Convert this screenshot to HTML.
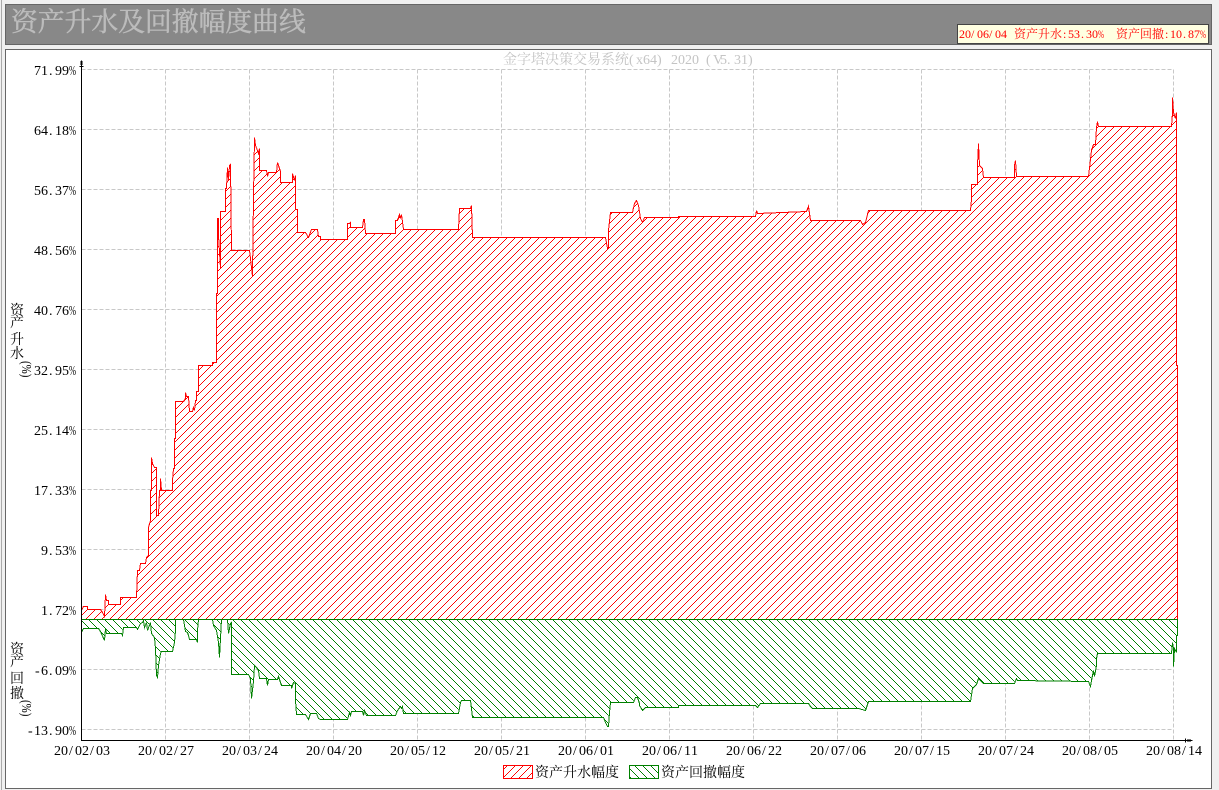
<!DOCTYPE html>
<html><head><meta charset="utf-8"><style>
html,body{margin:0;padding:0;background:#f0f0f0;width:1219px;height:790px;overflow:hidden}
svg{display:block}
text{font-family:"Liberation Serif","Noto Serif CJK SC",serif;font-size:14px;fill:#000}
.c{font-family:"Noto Serif CJK SC",serif}
.t{font-size:12px;fill:#f00}
.g{shape-rendering:crispEdges}
</style></head><body>
<svg width="1219" height="790" viewBox="0 0 1219 790" xmlns="http://www.w3.org/2000/svg">
<defs>
<pattern id="r" x="0" y="0" width="8" height="8" patternUnits="userSpaceOnUse"><rect x="0" y="0" width="8" height="8" fill="#ffffff"/><path d="M0 0h1v1h-1zM7 1h1v1h-1zM6 2h1v1h-1zM5 3h1v1h-1zM4 4h1v1h-1zM3 5h1v1h-1zM2 6h1v1h-1zM1 7h1v1h-1z" fill="#ff0000"/></pattern>
<pattern id="k" x="0" y="0" width="8" height="8" patternUnits="userSpaceOnUse"><rect x="0" y="0" width="8" height="8" fill="#ffffff"/><path d="M5 0h1v1h-1zM6 1h1v1h-1zM7 2h1v1h-1zM0 3h1v1h-1zM1 4h1v1h-1zM2 5h1v1h-1zM3 6h1v1h-1zM4 7h1v1h-1z" fill="#008000"/></pattern>
<path id="rp" d="M81 619L81 610L83 606L87 606L87 609L100 609L102 612L104 616L105 594L106 600L108 600L108 604L120 604L120 597L136 597L137 570L139 570L140 563L145 563L146 557L148 555L148 527L150 520L150 490L151 490L151 457L152 463L154 467L155 467L155 467L156 467L156 515L158 515L159 490L160 490L160 478L161 490L172 490L172 480L173 468L174 468L174 438L175 438L175 401L183 401L185 398L185 392L186 396L188 396L189 411L192 411L193 407L194 410L195 400L196 400L196 391L198 391L198 365L212 365L212 362L216 362L216 293L217 293L217 218L218 218L218 235L220 268L220 211L225 211L225 188L226 188L227 167L228 180L229 165L230 164L231 250L249 250L250 258L252 276L253 196L254 137L255 145L257 150L258 153L259 148L259 170L266 170L267 176L268 172L276 172L277 162L278 165L280 171L280 182L292 182L292 173L294 180L295 175L295 209L297 209L297 232L305 232L308 237L311 229L317 229L318 236L320 236L320 239L347 239L347 223L349 223L350 222L350 227L362 227L363 219L364 219L365 233L395 233L395 220L397 220L399 214L400 218L401 214L403 229L458 229L459 208L470 208L471 205L472 237L605 237L607 248L608 248L608 230L610 212L632 212L634 203L636 200L638 205L640 218L642 222L644 217L678 217L678 216L755 216L756 210L757 213L806 211L808 206L810 220L860 220L862 224L865 222L868 210L970 210L971 199L971 184L977 184L977 165L978 143L979 165L981 167L982 168L983 177L1014 177L1014 165L1015 160L1016 176L1088 176L1090 159L1091 150L1093 144L1095 144L1096 127L1097 121L1098 126L1171 126L1172 112L1172 97L1173 112L1175 118L1176 112L1176 365L1177 365L1177 619Z"/>
<path id="kp" d="M81 619L81 632L83 628L98 628L100 631L104 640L105 628L106 633L108 633L121 633L122 635L123 627L136 627L137 629L140 623L142 622L143 620L144 627L146 622L147 630L150 622L151 633L154 637L155 648L156 675L157 677L158 665L160 653L161 651L172 651L174 642L175 630L175 619L183 619L184 625L185 631L187 632L188 635L189 639L196 639L197 642L197 630L198 619L212 619L213 625L216 630L218 642L219 657L220 638L221 619L227 619L228 633L230 623L231 622L231 648L231 674L248 674L250 678L251 698L253 681L254 665L256 667L258 670L259 678L266 678L267 685L268 679L277 679L278 676L280 682L281 685L291 685L291 688L293 682L295 683L295 700L296 714L305 714L308 719L310 713L316 713L318 718L320 719L347 719L349 712L350 715L351 711L362 711L363 715L364 710L366 715L395 715L397 710L400 706L401 708L402 706L403 713L458 713L460 702L461 700L470 700L472 717L603 717L605 722L607 726L608 726L609 712L610 702L633 702L635 697L637 697L639 703L639 705L642 710L645 707L678 707L678 705L755 705L757 707L760 703L808 703L810 706L812 708L858 708L865 710L868 701L970 701L972 688L976 684L978 678L980 680L983 683L1014 683L1016 678L1017 680L1088 681L1090 686L1091 680L1093 670L1094 676L1096 665L1096 658L1097 653L1171 653L1172 642L1173 648L1173 666L1174 648L1176 652L1176 635L1177 635L1177 619Z"/>
</defs>
<rect x="1" y="0" width="1" height="790" fill="#aaa" class="g"/>
<rect x="5.5" y="4.5" width="1206" height="40" fill="#888888" stroke="#666" class="g"/>
<text class="c" x="11" y="31" style="font-size:26.8px;fill:#bcbcbc;stroke:#bcbcbc;stroke-width:.45">资产升水及回撤幅度曲线</text>
<rect x="957.5" y="24.5" width="251" height="19" fill="#ffffe1" stroke="#444" class="g"/>
<text class="t" y="38" x="959 965 971 977 983 989 995 1001">20/06/04</text>
<text class="t c" x="1014" y="38">资产升水</text>
<text class="t" y="38" x="1063 1068 1074 1081 1086 1092">:53.30</text>
<text class="t" transform="translate(1098 38) scale(.6 1)">%</text>
<text class="t c" x="1116" y="38">资产回撤</text>
<text class="t" y="38" x="1165 1170 1176 1183 1188 1194">:10.87</text>
<text class="t" transform="translate(1200 38) scale(.6 1)">%</text>
<rect x="5.5" y="49.5" width="1206" height="739" fill="#fff" stroke="#666" class="g"/>
<text class="c" x="503" y="64" style="fill:#c4c4c4">金字塔决策交易系统</text>
<text x="629 636 643 650 657 671 678 685 692 706 713 720 727 734 741 748" y="64" style="fill:#c4c4c4">(x64)2020(V5.31)</text>
<g class="g" stroke="#c8c8c8" stroke-dasharray="4 2" fill="none" transform="translate(.5 .5)">
<path d="M81 69H1173M81 129H1173M81 189H1173M81 249H1173M81 309H1173M81 369H1173M81 429H1173M81 489H1173M81 549H1173M81 609H1173M81 669H1173M81 729H1173"/>
<path d="M165 69V740M249 69V740M333 69V740M417 69V740M501 69V740M585 69V740M669 69V740M753 69V740M837 69V740M921 69V740M1005 69V740M1089 69V740M1173 69V740"/>
</g>
<use href="#rp" fill="url(#r)" class="g"/>
<use href="#kp" fill="url(#k)" class="g"/>
<g class="g" transform="translate(.5 .5)">
<use href="#rp" fill="none" stroke="#f00"/>
<use href="#kp" fill="none" stroke="#008000"/>
<path fill="none" stroke="#000" d="M81 60V740H1192"/>
<path fill="none" stroke="#000" d="M80 61H82M80 62H82M80 63H82M80 64H82M79 66H83M1185 738V742M1187 739V741M1188 739V741M1189 739V741M1190 739V741"/>
</g>
<text x="34 41 49 55 62" y="75">71.99</text><text transform="translate(69 75) scale(.6 1)">%</text>
<text x="34 41 49 55 62" y="135">64.18</text><text transform="translate(69 135) scale(.6 1)">%</text>
<text x="34 41 49 55 62" y="195">56.37</text><text transform="translate(69 195) scale(.6 1)">%</text>
<text x="34 41 49 55 62" y="255">48.56</text><text transform="translate(69 255) scale(.6 1)">%</text>
<text x="34 41 49 55 62" y="315">40.76</text><text transform="translate(69 315) scale(.6 1)">%</text>
<text x="34 41 49 55 62" y="375">32.95</text><text transform="translate(69 375) scale(.6 1)">%</text>
<text x="34 41 49 55 62" y="435">25.14</text><text transform="translate(69 435) scale(.6 1)">%</text>
<text x="34 41 49 55 62" y="495">17.33</text><text transform="translate(69 495) scale(.6 1)">%</text>
<text x="41 49 55 62" y="555">9.53</text><text transform="translate(69 555) scale(.6 1)">%</text>
<text x="41 49 55 62" y="615">1.72</text><text transform="translate(69 615) scale(.6 1)">%</text>
<text x="35 41 49 55 62" y="675">-6.09</text><text transform="translate(69 675) scale(.6 1)">%</text>
<text x="28 34 41 49 55 62" y="735">-13.90</text><text transform="translate(69 735) scale(.6 1)">%</text>
<text transform="translate(54 755)" x="0 7 15 21 28 36 42 49">20/02/03</text>
<text transform="translate(138 755)" x="0 7 15 21 28 36 42 49">20/02/27</text>
<text transform="translate(222 755)" x="0 7 15 21 28 36 42 49">20/03/24</text>
<text transform="translate(306 755)" x="0 7 15 21 28 36 42 49">20/04/20</text>
<text transform="translate(390 755)" x="0 7 15 21 28 36 42 49">20/05/12</text>
<text transform="translate(474 755)" x="0 7 15 21 28 36 42 49">20/05/21</text>
<text transform="translate(558 755)" x="0 7 15 21 28 36 42 49">20/06/01</text>
<text transform="translate(642 755)" x="0 7 15 21 28 36 42 49">20/06/11</text>
<text transform="translate(726 755)" x="0 7 15 21 28 36 42 49">20/06/22</text>
<text transform="translate(810 755)" x="0 7 15 21 28 36 42 49">20/07/06</text>
<text transform="translate(894 755)" x="0 7 15 21 28 36 42 49">20/07/15</text>
<text transform="translate(978 755)" x="0 7 15 21 28 36 42 49">20/07/24</text>
<text transform="translate(1062 755)" x="0 7 15 21 28 36 42 49">20/08/05</text>
<text transform="translate(1146 755)" x="0 7 15 21 28 36 42 49">20/08/14</text>
<text class="c" x="10" y="315">资</text><text class="c" x="10" y="327">产</text><text class="c" x="10" y="344">升</text><text class="c" x="10" y="358">水</text>
<text transform="translate(22 361) rotate(90) scale(.78 1)">(%)</text>
<text class="c" x="10" y="654">资</text><text class="c" x="10" y="666">产</text><text class="c" x="10" y="683">回</text><text class="c" x="10" y="698">撤</text>
<text transform="translate(22 700) rotate(90) scale(.78 1)">(%)</text>
<rect x="503.5" y="765.5" width="29" height="13" fill="url(#r)" stroke="#f00" class="g"/>
<rect x="629.5" y="765.5" width="29" height="13" fill="url(#k)" stroke="#008000" class="g"/>
<text class="c" x="535" y="777">资产升水幅度</text>
<text class="c" x="661" y="777">资产回撤幅度</text>
</svg>
</body></html>
